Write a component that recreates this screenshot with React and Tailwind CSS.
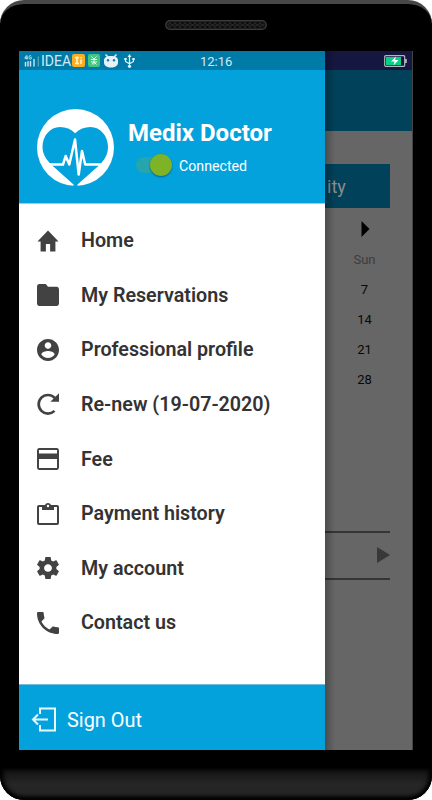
const menuItems = [
  {
    label: 'Home',
    viewBox: '1.6 2.6 20.8 17.8',
    path: 'M10 20v-6h4v6h5v-8h3L12 3 2 12h3v8z',
  },
  {
    label: 'My Reservations',
    viewBox: '2 4 20 16',
    path: 'M10 4H4c-1.1 0-1.99.9-1.99 2L2 18c0 1.1.9 2 2 2h16c1.1 0 2-.9 2-2V8c0-1.1-.9-2-2-2h-8l-2-2z',
  },
  {
    label: 'Professional profile',
    viewBox: '2 2 20 20',
    path: 'M12 2C6.48 2 2 6.48 2 12s4.48 10 10 10 10-4.48 10-10S17.52 2 12 2zm0 3c1.66 0 3 1.34 3 3s-1.34 3-3 3-3-1.34-3-3 1.34-3 3-3zm0 14.2c-2.5 0-4.71-1.28-6-3.22.03-1.99 4-3.08 6-3.08 1.99 0 5.97 1.09 6 3.08-1.29 1.94-3.5 3.22-6 3.22z',
  },
  {
    label: 'Re-new (19-07-2020)',
    viewBox: '0 0 22 22',
    path: 'M22 .3v8.4h-8.6l3.2-3.2A8 8 0 1 0 16.6 17l1.8 1.8A10.6 10.6 0 1 1 18.4 3.8z',
  },
  {
    label: 'Fee',
    viewBox: '2 4 20 16',
    path: 'M20 4H4c-1.11 0-1.99.89-1.99 2L2 18c0 1.11.89 2 2 2h16c1.11 0 2-.89 2-2V6c0-1.11-.89-2-2-2zm.2 14.6H3.8V12h16.4v6.6zm0-10.6H3.8V5.5h16.4v2.5z',
  },
  {
    label: 'Payment history',
    viewBox: '0 0 22 22',
    path: 'M8 2C8.500.7 9.600 0 11 0s2.500.7 3 2h6a2 2 0 0 1 2 2v16a2 2 0 0 1-2 2H2a2 2 0 0 1-2-2V4a2 2 0 0 1 2-2zM2 4v16h18V4h-3v3H5V4zM11 1.800a1.200 1.200 0 1 0 0 2.400 1.200 1.200 0 0 0 0-2.400z',
  },
  {
    label: 'My account',
    viewBox: '2.2 2 19.6 20',
    path: 'M19.43 12.98c.04-.32.07-.64.07-.98s-.03-.66-.07-.98l2.11-1.65c.19-.15.24-.42.12-.64l-2-3.46c-.12-.22-.39-.3-.61-.22l-2.49 1c-.52-.4-1.08-.73-1.69-.98l-.38-2.65C14.46 2.18 14.25 2 14 2h-4c-.25 0-.46.18-.49.42l-.38 2.65c-.61.25-1.17.59-1.69.98l-2.49-1c-.23-.09-.49 0-.61.22l-2 3.46c-.13.22-.07.49.12.64l2.11 1.65c-.04.32-.07.65-.07.98s.03.66.07.98l-2.11 1.65c-.19.15-.24.42-.12.64l2 3.46c.12.22.39.3.61.22l2.49-1c.52.4 1.08.73 1.69.98l.38 2.65c.03.24.24.42.49.42h4c.25 0 .46-.18.49-.42l.38-2.65c.61-.25 1.17-.59 1.69-.98l2.49 1c.23.09.49 0 .61-.22l2-3.46c.12-.22.07-.49-.12-.64l-2.11-1.65zM12 15.5c-1.93 0-3.5-1.57-3.5-3.5s1.57-3.5 3.5-3.5 3.5 1.57 3.5 3.5-1.57 3.5-3.5 3.5z',
  },
  {
    label: 'Contact us',
    viewBox: '3 3 18 18',
    path: 'M6.62 10.79c1.44 2.83 3.76 5.14 6.59 6.59l2.2-2.2c.27-.27.67-.36 1.02-.24 1.12.37 2.33.57 3.57.57.55 0 1 .45 1 1V20c0 .55-.45 1-1 1-9.39 0-17-7.61-17-17 0-.55.45-1 1-1h3.5c.55 0 1 .45 1 1 0 1.25.2 2.45.57 3.57.11.35.03.74-.25 1.02l-2.2 2.2z',
  },
];

const sundays = ['7', '14', '21', '28'];

function Speaker() {
  return (
    <svg className="w-[102px] h-[10px]" viewBox="0 0 102 10">
      <defs>
        <pattern id="mesh" width="5" height="5" patternUnits="userSpaceOnUse">
          <circle cx="2.5" cy="2.5" r="2" fill="#050505" stroke="#303030" strokeWidth=".8" />
        </pattern>
      </defs>
      <rect x=".7" y=".7" width="100.6" height="8.6" rx="4.3" fill="#171717" stroke="#3c3c3c" strokeWidth="1.2" />
      <rect x="3" y="2.5" width="96" height="5" rx="2.5" fill="url(#mesh)" />
    </svg>
  );
}

function SignalIcon() {
  return (
    <svg className="w-4 h-3 shrink-0" viewBox="0 0 16 12" fill="none" stroke="#cfe6f1">
      <path d="M2.5 0.5 0.8 3.2H3.9M3 0.5V4.5M7.3 1.2C6.4.1 5 .5 5 2.4S6.6 4.5 7.3 3.8V2.6H6.4" strokeWidth="1" />
      <path d="M1.5 7v4.500M4 6.200v5.300M6.500 6v5.500M10 4v7.500" strokeWidth="1.4" />
      <path d="M14.300 1.500v10" strokeWidth="1.2" opacity=".45" />
    </svg>
  );
}

function StatusBar() {
  return (
    <div className="h-[19px] bg-[#007aa7] flex items-center pl-[5px] text-[#d3eaf4] shrink-0">
      <SignalIcon />
      <span className="text-[14px] leading-none w-[30px] ml-[1px] whitespace-nowrap">IDEA</span>
      <svg className="w-[13px] h-[13px] ml-[1px]" viewBox="0 0 13 13">
        <rect width="13" height="13" rx="2" fill="#faaf23" />
        <path d="M3 3.5h4M5 3.5v6M3 9.5h4M9 3v1.2M9 5.5v4.5" stroke="#fff5dc" strokeWidth="1.5" />
      </svg>
      <svg className="w-3 h-[13px] ml-[3px]" viewBox="0 0 12 13">
        <rect width="12" height="13" rx="2" fill="#42c780" />
        <path d="M3.5 2.5 6 5l2.5-2.500M3 5.5h6M3 8h6M6 5v5.5M4 10.5 6 8l2.5 2.5" stroke="#e0ffed" fill="none" />
      </svg>
      <svg className="w-[14px] h-[14px] ml-1" viewBox="0 0 14 14">
        <path d="M1.5.5 4 3M12.5.5 10 3" stroke="#e6f2f8" strokeWidth="1.5" />
        <path d="M0 6.5C0 3.2 3 2 7 2s7 1.200 7 4.5v2C14 12 11 13.5 7 13.5S0 12 0 8.5z" fill="#e6f2f8" />
        <circle cx="4" cy="6.300" r="1.2" fill="#167ba1" />
        <circle cx="10" cy="6.300" r="1.2" fill="#167ba1" />
      </svg>
      <svg className="w-[11px] h-[14px] ml-1.5" viewBox="0 0 11 14" fill="none" stroke="#e6f2f8" strokeWidth="1.2">
        <path d="M5.5 2v10M1.5 5v2.5l4 2.3 4-2.3V5" />
        <path d="M5.5 0 3.6 3h3.8zM.3 4h2.4v2H.3zM8.3 4h2.4v2H8.3z" fill="#e6f2f8" stroke="none" />
        <circle cx="5.5" cy="12.3" r="1.6" fill="#e6f2f8" stroke="none" />
      </svg>
      <span className="text-[13px] leading-none ml-[65px] pt-px">12:16</span>
    </div>
  );
}

function HeartLogo() {
  return (
    <svg className="w-[77px] h-[77px] shrink-0" viewBox="0 0 77 77">
      <circle cx="38.5" cy="38.5" r="38.5" fill="#fff" />
      <path
        d="M38.2 24.300C34 20 29 18 23 18C13 18 5.500 27 5.500 38C5.500 45 9 50.500 14.700 56L36.500 75.500V77H40.500V75.500L62.500 56C68 50.500 71 45 71 38C71 27 63.500 18 53.500 18C47.500 18 42.500 20 38.200 24.300z"
        fill="#04a2dd"
      />
      <path
        d="M12 55.500H26L28.700 47L32.300 55.500L38 30.500L41.700 65.500L45 42L48.200 55.500H65"
        fill="none"
        stroke="#fff"
        strokeWidth="2.500"
        strokeLinejoin="round"
      />
    </svg>
  );
}

function Drawer() {
  return (
    <div className="w-[306px] flex flex-col bg-white shrink-0">
      <StatusBar />
      <div className="h-[134px] bg-[#04a2dd] border-b border-[#9ccbe3] flex pl-[18px] pt-[39px] text-white shrink-0">
        <HeartLogo />
        <div className="ml-[14px] pt-[9px]">
          <h1 className="text-[24px] leading-[30px] font-bold whitespace-nowrap">Medix Doctor</h1>
          <div className="flex items-center mt-[5px] ml-2">
            <div className="w-9 h-[23px] flex items-center">
              <div className="w-9 h-4 rounded-full bg-[#25a6ae] flex items-center justify-end">
                <div className="w-[22px] h-[22px] rounded-full bg-[#7db324] shadow-[0_1px_2px_rgba(0,0,0,0.4)] shrink-0" />
              </div>
            </div>
            <span className="text-[14.2px] leading-5 ml-[7px] pt-[3px]">Connected</span>
          </div>
        </div>
      </div>

      <nav className="flex-1 pt-[9.4px]">
        {menuItems.map((item) => (
          <div key={item.label} className="h-[54.6px] flex items-center pl-[18px] text-[#333]">
            <svg className="w-[22px] h-[22px] shrink-0" viewBox={item.viewBox} preserveAspectRatio="none" fill="#424242" fillRule="evenodd">
              <path d={item.path} />
            </svg>
            <span className="ml-[22px] pt-px text-[19.7px] leading-6 font-semibold whitespace-nowrap">{item.label}</span>
          </div>
        ))}
      </nav>

      <div className="h-[66px] bg-[#04a2dd] border-t border-[#73badb] flex items-center pl-3 pt-1 text-white shrink-0">
        <svg className="w-[25px] h-[25px]" viewBox="0 0 25 25" fill="none" stroke="#e9f8ff" strokeWidth="2">
          <path d="M9 7V1.500H24v22H9v-5.500M2 12.500h15M7 7.500l-5 5 5 5" />
        </svg>
        <span className="ml-[11px] pt-[2px] text-[19.9px] leading-6">Sign Out</span>
      </div>
    </div>
  );
}

// Calendar page, dimmed while the drawer is open
function DimmedPage() {
  return (
    <div className="flex-1 min-w-0 bg-[#666] overflow-hidden border-r border-[#444]">
      <div className="h-[19px] bg-[#151740] flex items-center justify-end pr-[5px]">
        <svg className="w-[23px] h-3" viewBox="0 0 23 12">
          <rect x=".7" y=".7" width="20" height="10.6" rx="1" fill="#151740" stroke="#b5b5bd" strokeWidth="1.2" />
          <path d="M2 2h15v8H2z" fill="#06cf87" />
          <path d="M21 4h1.8v4H21z" fill="#b5b5bd" />
          <path d="M12 1.5 7 6.5h3.5L9.5 10.5l5-5.5H11z" fill="#fff" />
        </svg>
      </div>
      <div className="h-[61px] bg-[#014159]" />
      <div className="mt-[33px] mr-[22px] h-11 bg-[#014159] flex items-center pl-[2px]">
        <span className="text-[18px] leading-6 pt-px text-[#8c8c8c]">ity</span>
      </div>
      <div className="flex flex-col items-center w-[79px] text-[13px] text-[#080808]">
        <svg className="w-[9px] h-4 mt-[13px] ml-[2px]" viewBox="0 0 9 16">
          <path d="M.5 0 8.5 8 .5 16z" fill="#000" />
        </svg>
        <span className="mt-2 h-[30px] leading-[30px] text-[#3d3d3d]">Sun</span>
        {sundays.map((day) => (
          <span key={day} className="h-[30px] leading-[30px]">{day}</span>
        ))}
      </div>
      <div className="mt-[136px] mr-[22px] h-[49px] border-y-2 border-[#353538] flex items-center justify-end pb-[2px]">
        <svg className="w-[13px] h-4" viewBox="0 0 13 16">
          <path d="M0 0 13 8 0 16z" fill="#38383a" />
        </svg>
      </div>
    </div>
  );
}

export default function App() {
  return (
    <div className="w-[432px] h-[800px] bg-white overflow-hidden font-[Roboto,sans-serif]">
      <div className="w-full h-full rounded-[24px] bg-black overflow-hidden flex flex-col border-t-4 border-[#474747]">
        <div className="h-[47px] shrink-0 flex justify-center pt-4">
          <Speaker />
        </div>
        <div className="relative ml-[19px] w-[394px] h-[699px] flex overflow-hidden shrink-0">
          <Drawer />
          <DimmedPage />
          <div className="absolute left-[306px] top-0 w-2.5 h-full bg-linear-to-r from-black/25 to-transparent" />
        </div>
        <div className="h-[18px] shrink-0" />
        <div className="flex-1 rounded-b-[24px] bg-linear-to-b from-[#111] via-[#262626] to-[#242424] shadow-[inset_0_-3px_4px_#000,inset_3px_0_5px_#000,inset_-3px_0_5px_#000]" />
      </div>
    </div>
  );
}
